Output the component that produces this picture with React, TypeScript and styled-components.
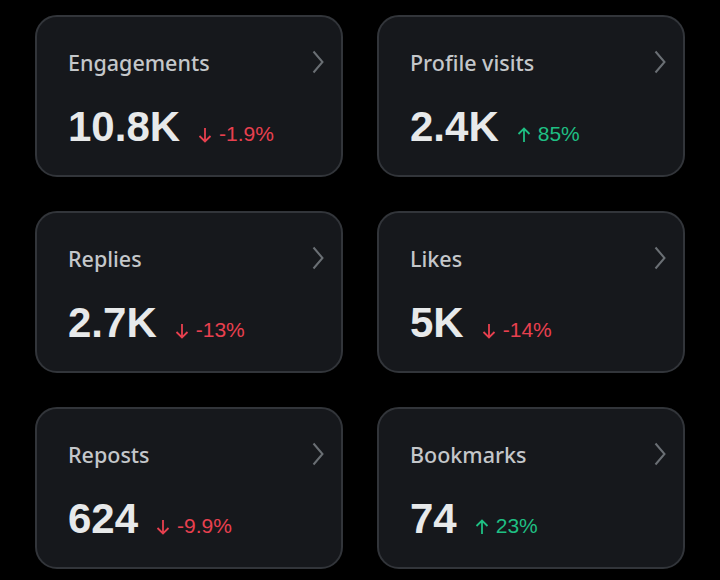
import React from 'react';
import styled, { createGlobalStyle } from 'styled-components';

const GlobalStyle = createGlobalStyle`
    html, body {
        margin: 0;
        background: #000;
    }
`;

const Grid = styled.main`
    display: grid;
    grid-template-columns: repeat(2, 308px);
    grid-auto-rows: 162px;
    gap: 34px;
    padding: 15px 35px;
    background: #000;
    min-height: 580px;
    box-sizing: border-box;
`;

const Card = styled.section`
    display: flex;
    flex-direction: column;
    box-sizing: border-box;
    background: #16181c;
    border: 2px solid #32353a;
    border-radius: 22px;
    padding: 30px 16px 0 31px;
`;

const Header = styled.div`
    display: flex;
    align-items: center;
    justify-content: space-between;
    height: 30px;
`;

const Title = styled.h2`
    margin: 0;
    font-family: 'Noto Sans', Lato, sans-serif;
    font-size: 21.5px;
    font-weight: 500;
    color: #c4c7ca;
`;

const Value = styled.div`
    display: flex;
    align-items: baseline;
    margin-top: 26px;
`;

const Big = styled.span`
    font-family: 'Liberation Sans', Arial, sans-serif;
    font-size: 42px;
    font-weight: 700;
    color: #e7e9ea;
    margin-right: 18px;
`;

type ChangeProps = { $up: boolean };
const Change = styled.span<ChangeProps>`
    display: inline-flex;
    align-items: baseline;
    gap: 7px;
    font-family: 'Liberation Sans', Arial, sans-serif;
    font-size: 21px;
    color: ${({ $up }) => ($up ? '#1fbf83' : '#e8404f')};

    svg {
        align-self: center;
        position: relative;
        top: 1px;
    }
`;

const Chevron = () => (
    <svg width="14" height="26" viewBox="0 0 14 26" fill="none">
        <path d="M2.5 2.5 L11.5 13 L2.5 23.5" stroke="#6a6f74" strokeWidth="2" />
    </svg>
);

const Arrow = ({ up }: { up: boolean }) => (
    <svg width="14" height="16" viewBox="0 0 14 16" fill="none" stroke="currentColor" strokeWidth="1.8">
        {up ? (
            <path d="M7 15 V1.5 M1.5 7 L7 1.5 L12.5 7" />
        ) : (
            <path d="M7 1 V14.5 M1.5 9 L7 14.5 L12.5 9" />
        )}
    </svg>
);

const stats = [
    { title: 'Engagements', value: '10.8K', change: '-1.9%', up: false },
    { title: 'Profile visits', value: '2.4K', change: '85%', up: true },
    { title: 'Replies', value: '2.7K', change: '-13%', up: false },
    { title: 'Likes', value: '5K', change: '-14%', up: false },
    { title: 'Reposts', value: '624', change: '-9.9%', up: false },
    { title: 'Bookmarks', value: '74', change: '23%', up: true },
];

const App = () => (
    <>
        <GlobalStyle />
        <Grid>
            {stats.map(s => (
                <Card key={s.title}>
                    <Header>
                        <Title>{s.title}</Title>
                        <Chevron />
                    </Header>
                    <Value>
                        <Big>{s.value}</Big>
                        <Change $up={s.up}>
                            <Arrow up={s.up} />
                            {s.change}
                        </Change>
                    </Value>
                </Card>
            ))}
        </Grid>
    </>
);

export default App;
